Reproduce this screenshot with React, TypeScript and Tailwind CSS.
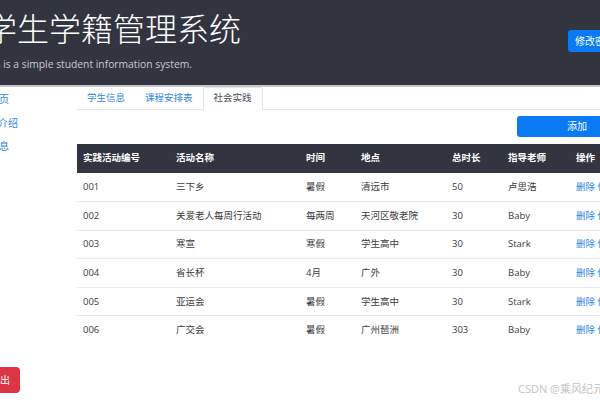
import React from "react";

const cols = [
  { label: "实践活动编号", w: "w-[93px]" },
  { label: "活动名称", w: "w-[130px]" },
  { label: "时间", w: "w-[55px]" },
  { label: "地点", w: "w-[91px]" },
  { label: "总时长", w: "w-[56px]" },
  { label: "指导老师", w: "w-[68px]" },
  { label: "操作", w: "w-[67px]" },
];

const rows = [
  ["001", "三下乡", "暑假", "清远市", "50", "卢思浩"],
  ["002", "关爱老人每周行活动", "每两周", "天河区敬老院", "30", "Baby"],
  ["003", "寒宣", "寒假", "学生高中", "30", "Stark"],
  ["004", "省长杯", "4月", "广外", "30", "Baby"],
  ["005", "亚运会", "暑假", "学生高中", "30", "Stark"],
  ["006", "广交会", "暑假", "广州琶洲", "303", "Baby"],
];

const tabs = [
  { label: "学生信息", active: false },
  { label: "课程安排表", active: false },
  { label: "社会实践", active: true },
];

export default function App() {
  return (
    <div className="relative h-[400px] w-[600px] overflow-hidden bg-white font-['Open_Sans','Noto_Sans_CJK_SC',sans-serif]">
      {/* header */}
      <header className="flex h-[87px] items-start border-b-2 border-[#c6c6c8] bg-[#32343f]">
        <div className="flex flex-col">
          <h1 className="ml-[-15px] mt-[13px] text-[32px] font-light leading-[32px] whitespace-nowrap text-white">
            学生学籍管理系统
          </h1>
          <p className="ml-[-19px] mt-[12px] text-[10.3px] leading-[14px] whitespace-nowrap text-[#c9cacf]">
            This is a simple student information system.
          </p>
        </div>
        <button className="ml-auto mr-[-24px] mt-[30px] h-[22px] w-[56px] shrink-0 rounded-[3px] bg-[#0a7bf5] pl-[7px] text-left text-[10px] whitespace-nowrap text-white">
          修改密码
        </button>
      </header>

      <div className="flex h-[313px]">
        {/* sidebar */}
        <aside className="flex w-[77px] shrink-0 flex-col text-[10px] text-[#2f86e0]">
          <a className="ml-[-11px] mt-[5px] leading-[14px] whitespace-nowrap">首页</a>
          <a className="ml-[-22px] mt-[9.5px] leading-[14px] whitespace-nowrap">系统介绍</a>
          <a className="ml-[-31px] mt-[9.5px] leading-[14px] whitespace-nowrap">学生信息</a>
          <button className="mb-[7px] ml-[-20px] mt-auto h-[26px] w-[40px] rounded-[4px] bg-[#dc3545] text-[10px] text-white">
            退出
          </button>
        </aside>

        {/* main */}
        <main className="flex w-[560px] shrink-0 flex-col">
          <nav className="flex h-[23px] border-b border-[#e3e6e9] text-[9.5px]">
            {tabs.map((t) => (
              <span
                key={t.label}
                className={
                  t.active
                    ? "mb-[-1px] flex items-center rounded-t-[3px] border border-[#e3e6e9] border-b-white bg-white px-[10px] text-[#495057]"
                    : "flex items-center px-[10px] text-[#2f86e0]"
                }
              >
                {t.label}
              </span>
            ))}
          </nav>

          <div className="flex justify-end pb-[7px] pt-[6px]">
            <button className="h-[21px] w-[120px] rounded-[3px] bg-[#0a7bf5] text-[10px] text-white">添加</button>
          </div>

          <table className="w-full table-fixed border-collapse text-left text-[9.5px]">
            <thead>
              <tr className="h-[29px] bg-[#32343f] text-white">
                {cols.map((c) => (
                  <th key={c.label} className={`${c.w} px-[6px] font-bold whitespace-nowrap`}>
                    {c.label}
                  </th>
                ))}
              </tr>
            </thead>
            <tbody className="text-[#3b3b3b]">
              {rows.map((r, i) => (
                <tr key={r[0]} className={i === 0 ? "h-[28.6px]" : "h-[28.6px] border-t border-[#e9ebee]"}>
                  {r.map((cell, j) => (
                    <td key={j} className="px-[6px] whitespace-nowrap">
                      {cell}
                    </td>
                  ))}
                  <td className="px-[6px] whitespace-nowrap text-[#2f86e0]">删除 修改</td>
                </tr>
              ))}
            </tbody>
          </table>
        </main>
      </div>

      {/* watermark */}
      <span className="absolute left-[518px] top-[381px] text-[11px] whitespace-nowrap text-[#c4c4c4]">
        CSDN @乘风纪元
      </span>
    </div>
  );
}
